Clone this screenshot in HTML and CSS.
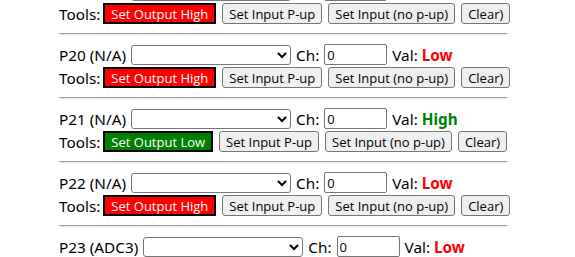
FILE: index.html
```html
<!DOCTYPE html>
<html>
<head>
<meta charset="utf-8">
<link rel="stylesheet" href="styles.css">
</head>
<body>
<div class="pins">
  <div class="pin first">
    <div class="line"><span>P19 (N/A)</span><select class="sel"><option></option></select><span>Ch:</span><input class="ch" value="0"><span>Val: <b class="low">Low</b></span></div>
    <div class="line tools"><span class="lbl">Tools:</span><button class="btn red">Set Output High</button><button class="btn">Set Input P-up</button><button class="btn">Set Input (no p-up)</button><button class="btn">Clear)</button></div>
  </div>
  <hr class="sep">
  <div class="pin">
    <div class="line"><span>P20 (N/A)</span><select class="sel"><option></option></select><span>Ch:</span><input class="ch" value="0"><span>Val: <b class="low">Low</b></span></div>
    <div class="line tools"><span class="lbl">Tools:</span><button class="btn red">Set Output High</button><button class="btn">Set Input P-up</button><button class="btn">Set Input (no p-up)</button><button class="btn">Clear)</button></div>
  </div>
  <hr class="sep">
  <div class="pin">
    <div class="line"><span>P21 (N/A)</span><select class="sel"><option></option></select><span>Ch:</span><input class="ch" value="0"><span>Val: <b class="high">High</b></span></div>
    <div class="line tools"><span class="lbl">Tools:</span><button class="btn green">Set Output Low</button><button class="btn">Set Input P-up</button><button class="btn">Set Input (no p-up)</button><button class="btn">Clear)</button></div>
  </div>
  <hr class="sep">
  <div class="pin">
    <div class="line"><span>P22 (N/A)</span><select class="sel"><option></option></select><span>Ch:</span><input class="ch" value="0"><span>Val: <b class="low">Low</b></span></div>
    <div class="line tools"><span class="lbl">Tools:</span><button class="btn red">Set Output High</button><button class="btn">Set Input P-up</button><button class="btn">Set Input (no p-up)</button><button class="btn">Clear)</button></div>
  </div>
  <hr class="sep">
  <div class="pin">
    <div class="line"><span>P23 (ADC3)</span><select class="sel"><option></option></select><span>Ch:</span><input class="ch" value="0"><span>Val: <b class="low">Low</b></span></div>
  </div>
</div>
</body>
</html>
```
FILE: styles.css
```css
html, body {
  margin: 0;
  padding: 0;
  background: #fff;
  overflow: hidden;
}
body {
  font-family: "Noto Sans", "Open Sans", sans-serif;
  font-size: 15.3px;
  color: #000;
}
.pins {
  margin-left: 59px;
  width: 448px;
}
.pin {
  padding: 9px 0;
}
.pin.first {
  margin-top: -29px;
}
.sep {
  margin: 0;
  height: 0;
  border: 0;
  border-top: 1px solid #a0a0a0;
  border-bottom: 1px solid #e8e8e8;
}
.line {
  display: flex;
  align-items: center;
  gap: 5px;
  height: 21px;
  white-space: nowrap;
}
.tools {
  margin-top: 2px;
  gap: 6px;
}
.tools .lbl {
  margin-right: -3px;
}
.sel {
  width: 160px;
  height: 20px;
  border: 1px solid #767676;
  border-radius: 3px;
  background: #fff;
  font-size: 13px;
}
.ch {
  width: 63px;
  height: 21px;
  box-sizing: border-box;
  border: 1px solid #767676;
  border-radius: 2px;
  padding: 0 2px;
  font-family: "Open Sans", sans-serif;
  font-size: 13px;
}
b.low { color: #f00; }
b.high { color: #008000; }
.btn {
  height: 21px;
  padding: 0 6px;
  font-family: "Open Sans", sans-serif;
  font-size: 13px;
  background: #efefef;
  border: 1px solid #767676;
  border-radius: 3px;
  color: #000;
}
.btn.red {
  background: #f00;
  color: #fff;
  border: 2px solid #000;
  border-radius: 0;
}
.btn.green {
  background: #008000;
  color: #fff;
  border: 2px solid #000;
  border-radius: 0;
}
```
